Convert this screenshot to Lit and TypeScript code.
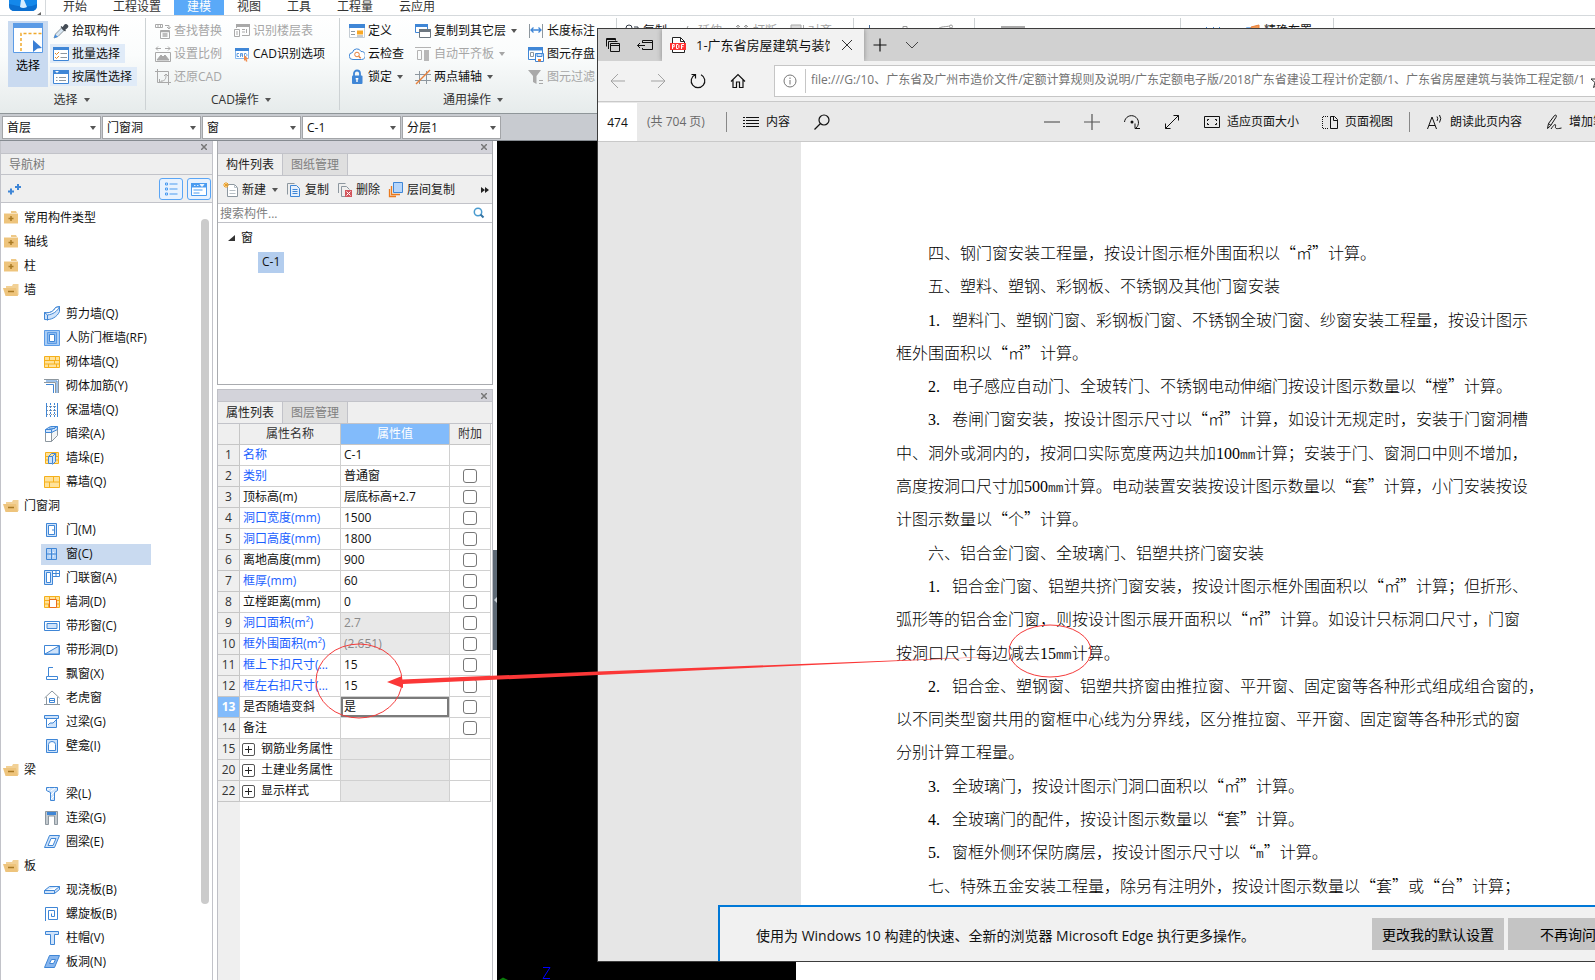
import { LitElement, html, svg, css, nothing, TemplateResult } from "lit";
import { customElement } from "lit/decorators.js";
import { classMap } from "lit/directives/class-map.js";

const B = "#3f86d6";
const L = "#cfe3fa";
const G = "#8d979f";
const Y = "#f5b01b";
const YL = "#ffe29a";

const brick = svg`<path d="M.5 2.500h15v11H.5z" fill=${YL} stroke=${Y}/><path d="M0 6.500h16M0 10h16M5.500 2v4.500M10.500 6.500V10M4.500 10v4M11.500 2v4.500M12.500 10v4" stroke=${Y} fill="none"/>`;

const ICONS: Record<string, TemplateResult> = {
  pick: svg`<path d="M1 15l1.500-4 6-6 2.500 2.500-6 6z" fill="#d8e6f2" stroke=${G}/><path d="M1 15l1.300-3.500 2.500 2.300z" fill="#3d8ee8"/><path d="M8 3.500l4.500 4.500M9.500 5.500L12 2c1-1.200 3.500.8 2.300 2.200L11 7z" fill="#444c55" stroke="#444c55" stroke-width="1.300"/>`,
  batch: svg`<path d="M.5 1.500h15v13H.5z" fill="#fff" stroke=${B}/><path d="M0 1h16v3H0z" fill=${B}/><path d="M2 7l1.500 1.500L6 6M2 11l1.500 1.500L6 10" stroke="#e08a2b" fill="none"/><path d="M7.500 7.500H14M7.500 11.500H14" stroke=${G}/>`,
  byattr: svg`<path d="M.5 1.500h15v13H.5z" fill="#fff" stroke=${B}/><path d="M0 1h16v4H0z" fill=${B}/><path d="M2 2h4l-2 2z" fill="#fff"/><path d="M3 8.500h1.500M3 11.500h1.500M6 8.500h7M6 11.500h7" stroke=${G}/>`,
  find: svg`<g stroke="#a9a9a9" fill="none"><path d="M.5 1.500h7v3h-7zM3 1.500v3M5.500 1.500v3M10 2.500h4v3M12 4l2 2 1.500-2M5.500 7.500h9v8h-9z"/><path d="M6 8.500h8M7.500 11h5M7.500 13h5" stroke-width="1.500"/></g>`,
  scale: svg`<g stroke="#a9a9a9" fill="none"><path d="M1 2.500h5M3 .5l-2 2 2 2M10 2.500h5M13 .5l2 2-2 2M.5 6.500h15v9H.5z"/><path d="M2 14l4-5 2 2 2-2 4 5z" fill="#a9a9a9"/></g>`,
  restore: svg`<g stroke="#a9a9a9" fill="none"><path d="M2.500 0v13.500H16M0 2.500h13.500V16"/><path d="M6 12c4 0 5-2 5-6M4.500 10v3h3M9 7l2-2 2 2"/></g>`,
  floors: svg`<g stroke="#a9a9a9" fill="none"><path d="M2.500 5V2.500h13v10H8M.5 6.500h5v7h-5zM2 9h2M2 11h2M8 6.500h3M8 9h3M12.500 6v4"/><path d="M2 2.500h14" stroke-width="3"/></g>`,
  cadopt: svg`<path d="M1.500 2.500h13v10h-13z" fill="#fff" stroke="#86b8ef"/><path d="M1 2h14v3H1z" fill=${B}/><path d="M5 7.500H3v3h2M6.500 11V7.500h2V11M6.500 9h2M10.500 7.500h1.500l.8 1v1.200l-.8.8h-1.500z" stroke=${B} fill="none" stroke-width=".8"/><path d="M10 9l4.500 4-2 .3 1 2-1.500.5-.8-2L10 15z" fill="#f08a4b"/>`,
  define: svg`<path d="M.5 1.500h15v13H.5z" fill="#fff" stroke="#c5cdd4"/><path d="M0 1h16v4H0z" fill=${B}/><path d="M2 8.500h4M2 11.500h4" stroke=${G}/><path d="M8 7.500h6v4H8z" fill="#f9a825"/><path d="M8 13h6" stroke=${G}/>`,
  cloud: svg`<path d="M4 13.500A3.500 3.500 0 0 1 3.500 6.500 4.500 4.500 0 0 1 12 5.500 4 4 0 0 1 12.500 13.500z" fill="#fff" stroke=${B}/><circle cx="8" cy="8.500" r="2.300" fill="none" stroke="#e8803a"/><path d="M9.700 10.200l2 2" stroke="#e8803a" stroke-width="1.400"/>`,
  lock: svg`<path d="M5 7V4.500a3 3 0 0 1 6 0V7" fill="none" stroke=${B} stroke-width="1.800"/><rect x="3" y="6.500" width="10.500" height="8.500" rx="1" fill=${B}/><path d="M8 9v4M6.700 9.700h2.600" stroke="#fff" stroke-width="1.400"/>`,
  copyfl: svg`<path d="M.5 1.500h12v8H.5z" fill="#fff" stroke=${B}/><path d="M0 1h13v3H0z" fill=${B}/><path d="M4.500 6.500h11v8h-11z" fill="#fff" stroke="#6d7780"/><path d="M4 6h12v3H4z" fill="#6d7780"/>`,
  align: svg`<path d="M0 1.500h16" stroke="#b3b3b3"/><path d="M2.500 4.500h4v9h-4z" fill="none" stroke="#b3b3b3"/><path d="M9 4h5v11H9z" fill="#b8b8b8"/>`,
  axis: svg`<path d="M4.500 2v13M0 5.500h16M0 11.500h16M11.500 2v13" stroke=${G}/><path d="M1 15L15 1" stroke="#e8803a" stroke-width="1.400"/>`,
  length: svg`<path d="M1.500 1v14M14.500 1v14" stroke=${G}/><path d="M3 7h10M5.500 4.500L3 7l2.500 2.500M10.500 4.500L13 7l-2.500 2.500" stroke=${B} fill="none" stroke-width="1.300"/>`,
  save: svg`<path d="M.5 1.500h14v12H.5z" fill="#fff" stroke=${B}/><path d="M0 1h15v3.500H0z" fill=${B}/><path d="M2.500 6.500h3v4h-3z" stroke=${G} fill="none"/><path d="M7.500 7.500h8v8h-8z" fill="#fff" stroke=${B}/><path d="M9 7.500h5v3H9z" fill=${L} stroke=${B}/><path d="M10 13h3v2.500h-3z" fill="#e8803a"/>`,
  filter: svg`<path d="M0 1h13L8.500 7v8L5 13V7z" fill="#a9a9a9"/><path d="M11 11.500h4M11 14.500h4" stroke="#a9a9a9"/>`,
  rcopy: svg`<circle cx="5" cy="5" r="3" fill="#fff" stroke="#333a44"/><path d="M10 4h4v4M12 6l2 2 2-2" fill="none" stroke="#333a44"/><circle cx="11" cy="12" r="3" fill="none" stroke="#333a44"/>`,
  extend: svg`<path d="M9 3L4 15" stroke="#9a9a9a"/>`,
  brk: svg`<path d="M4 2v4M2 4l2-2 2 2M12 2v4M10 4l2-2 2 2M0 9h16" stroke="#9a9a9a" fill="none"/>`,
  alignr: svg`<path d="M2 2h10v12H2z" fill="#dcdcdc" stroke="#a9a9a9"/><path d="M14.500 2v13" stroke="#a9a9a9"/>`,
  vline: svg`<path d="M8.500 2v14" stroke="#4d6f99"/>`,
  node: svg`<path d="M4 3.500h4v4H4zM8 6h8" fill="#fff" stroke="#9a9a9a"/>`,
  arc: svg`<path d="M1 6C4 3 9 4 13 3" fill="none" stroke="#9a9a9a"/><circle cx="14" cy="3.500" r="1.500" fill="#fff" stroke="#9a9a9a"/><circle cx="2" cy="7" r="1.500" fill="#fff" stroke="#9a9a9a"/>`,
  slab: svg`<path d="M0 3h24v12H0z" fill="#a9a9a9"/>`,
  rectg: svg`<path d="M.5 5.500h17v9H.5z" fill="#fff" stroke="#a9a9a9"/>`,
  bars: svg`<path d="M1.500 4v12M8.500 4v12M14.500 4v12" stroke=${B}/>`,
  layout: svg`<path d="M1.500 4.500h10v10h-10z" fill="#e9f2fc" stroke="#86b8ef"/><path d="M6 4l8-2v6l-7 1z" fill="#f39a55" stroke="#e8803a"/>`,
  shear: svg`<path d="M.5 6.500c5 1 9-1 11-5l4-1v5c-2 5-8 9-15 8z" fill=${L} stroke=${B}/><path d="M.5 6.500c5 1 9-1 11-5l4-1c-2 5-7 8-12 8.500z" fill="#fff" stroke=${B}/><path d="M3.500 9v5.500" stroke=${B}/>`,
  frame: svg`<path d="M.5.5h15v15H.5z" fill="#a9cdf5" stroke="#5b9be6"/><path d="M3.500 2.500h9v11h-9z" fill="#8fbcf0" stroke="#5b9be6"/><path d="M5.500 4.500h5v7h-5z" fill="#fff" stroke=${B}/>`,
  brick,
  rebar: svg`<path d="M0 1.500h14.500V15M0 4.500h11.500V15" stroke=${G} fill="none"/><path d="M2 3h11v12M2 6.500h7.500V15" stroke=${B} fill="none"/>`,
  insul: svg`<path d="M6.500 1v14M10.500 1v14" stroke=${B} stroke-dasharray="2 1"/><path d="M2.500 1v14M13.500 1v14" stroke=${B}/><path d="M3 4.500h10M3 8.500h10M3 12.500h10" stroke=${G} stroke-dasharray="1 1"/>`,
  hbeam: svg`<path d="M1.500 6.500h6v9h-6z" fill="#fff" stroke=${G}/><path d="M7.500 6.500l6-4v7l-6 6z" fill="#f1f4f6" stroke=${G}/><path d="M1.500 6.500v-3l5-3h7v3l-6 3z" fill=${L} stroke=${B}/><path d="M1.500 3.500h6v3M7.500 3.500l6-3M5 2l6 .5" stroke=${B} fill="none"/>`,
  pier: svg`<path d="M1.500 2.500h13v11h-13z" fill=${YL} stroke=${Y}/><path d="M1 6.500h14M1 10h14M5 10v3M12 3v4" stroke=${Y}/><path d="M4.500 6.500h4v7h-4zM8.500 6.500l3-3v8l-3 3" fill=${L} stroke=${B}/><path d="M4.500 6.500l3-3h4" fill="none" stroke=${B}/>`,
  curtain: svg`<path d="M.5 2.500h15v11H.5z" fill=${YL} stroke=${Y}/><path d="M0 8h16M9.500 2v6M5.500 8v6" stroke=${Y}/>`,
  door: svg`<path d="M2.500 1.500h10v13h-10z" fill=${L} stroke=${B}/><path d="M4.500 3.500h6v9h-6z" fill="#fff" stroke=${B}/><path d="M9 7v2" stroke=${B}/>`,
  window: svg`<path d="M2.500 2.500h10v11h-10zM7.500 2.500v11M2.500 8h10" fill="#b7d4f6" stroke=${B}/><path d="M6 6v1M9.500 6v1M6 9.500v1M9.500 9.500v1" stroke="#fff"/>`,
  doorwin: svg`<path d="M.5.5h8v14h-8z" fill=${L} stroke=${B}/><path d="M2.500 2.500h4v10h-4z" fill="#fff" stroke=${B}/><path d="M8.500.5h7v6h-7zM12 .5v6M8.500 3.500h7" fill="#fff" stroke=${B}/>`,
  hole: svg`${brick}<path d="M5.500 5.500h7v8h-7z" fill="#fff" stroke="#ea6d1e"/>`,
  stripwin: svg`<path d="M.5 3.500h15v9H.5z" fill="#fff" stroke=${B}/><path d="M3 5.500h10v5H3z" fill=${L} stroke=${B}/>`,
  striphole: svg`<path d="M.5 3.500h15v9H.5z" fill="#fff" stroke=${B}/><path d="M1 12L15 4v8z" fill=${L} stroke=${B}/>`,
  bay: svg`<path d="M9 1.500H4.500v9h9v3h-11v-3h2" fill="none" stroke=${B}/>`,
  dormer: svg`<path d="M.5 8L8 1l7.500 7M2.500 7v7.500M13.500 7v7.500M0 14.500h16" fill="none" stroke=${G}/><path d="M5.500 8.500h5v4h-5zM5.500 10.500h5" fill="#fff" stroke=${B}/>`,
  lintel: svg`<path d="M.5 1.500h14v3H.5z" fill=${L} stroke=${B}/><path d="M2.500 4.500h10v9h-10z" fill="#fff" stroke=${B}/><path d="M3 13l3-4h3l3-3v7z" fill=${L}/><path d="M4 11l2-2h3l3-3" fill="none" stroke=${B}/>`,
  niche: svg`<path d="M2.500 1.500h11v13h-11z" fill=${L} stroke=${B}/><path d="M4.500 12.500v-6a3.500 3 0 0 1 7 0v6z" fill="#fff" stroke=${B}/>`,
  beam: svg`<path d="M2.500 1.500h11v3l-3 2v8h-4v-8l-4-2z" fill=${L} stroke=${B}/><path d="M3 4l3-2M7 5l4-3M7 9l3-3M7 13l3-3" stroke="#fff"/>`,
  link: svg`<path d="M1.500 1.500h12v13h-3V6h-6v8.500h-3z" fill="#c4cacf" stroke=${G}/><path d="M3 2h9v3H3z" fill=${B}/>`,
  ring: svg`<path d="M5.500 1.500h10l-5 12H.5z" fill=${L} stroke=${B}/><path d="M7 4.500h5l-3 7H4z" fill="#fff" stroke=${B}/>`,
  slabc: svg`<path d="M.5 8.500l5-4h10l-5 4zM.5 8.500v3h10l5-4v-3M10.500 8.500v3" fill=${L} stroke=${B}/>`,
  spiral: svg`<path d="M1.500 15V1.500h12v12H4.500v-9h6v6h-3v-3" fill="none" stroke=${B}/>`,
  cap: svg`<path d="M1.500 1.500h13v3h-4v10h-4v-10h-5z" fill=${L} stroke=${B}/>`,
  slabh: svg`<path d="M5.500 1.500h10l-5 12H.5z" fill="#86b5ee" stroke=${B}/><path d="M7.500 5.500h4l-2 4h-4z" fill="#fff" stroke=${B}/>`,
  slabx: svg`<path d="M4.500 3.500h10l-4 9H.5z" fill=${L} stroke=${B}/>`,
  folder: svg`<path d="M8 1h5l1 2H8z" fill="#eec988"/><path d="M1 3.500h14v10H1z" fill="#eec47c"/><path d="M8 6v5M5.500 8.500h5" stroke="#a97a24" stroke-width="1.500"/>`,
  folderopen: svg`<path d="M3 4h6l1-2h5.500v11H3z" fill="#f2d196"/><path d="M0 6h13l2 8H2.500z" fill="#eec47c"/><path d="M5 9.500h6" stroke="#a97a24" stroke-width="1.500"/>`,
  newdoc: svg`<path d="M4.500 2.500h7l3 3v9h-10z" fill="#fff" stroke=${G}/><path d="M11.500 2.500v3h3M6.500 8.500h6M6.500 11.500h6" stroke="#b8c0c6" fill="none"/><path d="M3 0v6M0 3h6M1 1l4 4M5 1L1 5" stroke="#f0a020"/>`,
  copy: svg`<path d="M1.500 12.500v-11h7" fill="none" stroke=${G}/><path d="M4.500 3.500h6l3 3v8h-9z" fill="#e6f0fc" stroke=${B}/><path d="M6.500 7.500h5M6.500 9.500h5M6.500 11.500h5" stroke=${B}/>`,
  del: svg`<path d="M1.500 11V1.500h7M4.500 14.500V4.500h5l3 3M4.500 14.500h4" fill="none" stroke=${G}/><path d="M8 8h7v7H8z" fill="#d3545c"/><path d="M9.500 9.500l4 4M13.500 9.500l-4 4" stroke="#fff"/>`,
  layercopy: svg`<path d="M5.500.5h9v10h-9z" fill="#b6d6fb" stroke=${B}/><path d="M3.500 4v8.500H12M1.500 7v7.500H8" fill="none" stroke="#ea7a1e" stroke-width="1.300"/>`,
  search: svg`<circle cx="7" cy="7" r="3.700" fill="none" stroke="#4a9bcf" stroke-width="1.500"/><path d="M9.500 9.500l3 3" stroke="#3574a3" stroke-width="2"/>`,
  plusplus: svg`<path d="M1 10.500h6M4 7.500v6M8 6h6M11 3v6" stroke=${B} stroke-width="2"/>`,
  list: svg`<path d="M2.500 2h2v2h-2zM2.500 7h2v2h-2zM2.500 12h2v2h-2z" fill="none" stroke="#4a9bf0"/><path d="M6.500 3h8M6.500 8h8M6.500 13h8" stroke="#4a9bf0"/>`,
  card: svg`<path d="M.5 2.500h15v12H.5z" fill="#fff" stroke="#4a9bf0"/><path d="M0 2h16v4.500H0z" fill="#4a9bf0"/><path d="M3 4.500h1.500M6 4.500h1.500M9 3.500h4l-2 2z" stroke="#fff" fill="#fff" stroke-width=".8"/><path d="M2.500 9h9M2.500 12h6" stroke="#4a9bf0"/>`,
  tabs: svg`<path d="M4.500 6.500h9v8h-9zM4.500 8.500h9M2.500 12V4.500h9M.5 9.500v-8h9v2M.5 2.500h9" fill="none" stroke="#111"/>`,
  setaside: svg`<path d="M5.500 6V3.500h10v9h-10V11M5.500 5.500h10M8 8.500H.5M3 6L.5 8.500 3 11" fill="none" stroke="#111"/>`,
  pdf: svg`<path d="M2.500 15.500V.5h8l4 4v11z" fill="#fff" stroke="#222"/><path d="M10.500.5v4h4" fill="none" stroke="#222"/><path d="M0 6h16v7H0z" fill="#f33"/><path d="M2.500 12V7.500h1.700v2.300H2.500M6.500 7.500h1.500l.9 1v2l-.9 1H6.500zM11.500 12V7.500h2.500M11.500 9.700h2" stroke="#fff" fill="none"/>`,
  close: svg`<path d="M3 3l10 10M13 3L3 13" stroke="#333"/>`,
  plus: svg`<path d="M8 1.500v13M1.500 8h13" stroke="#111" stroke-width="1.200"/>`,
  chev: svg`<path d="M2 5l6 6 6-6" fill="none" stroke="#444"/>`,
  back: svg`<path d="M15 8H1M8 1L1 8l7 7" fill="none" stroke="#a3a3a3"/>`,
  fwd: svg`<path d="M1 8h14M8 1l7 7-7 7" fill="none" stroke="#a3a3a3"/>`,
  refresh: svg`<path d="M11 1.800A6.800 6.800 0 1 1 5 1.800M1.500 1.500H5.500V5.500" fill="none" stroke="#111" stroke-width="1.200"/>`,
  home: svg`<path d="M1 8.500L8 1.500l7 7M3 7v7.500h3.500V9h3v5.500H13V7" fill="none" stroke="#111" stroke-width="1.200"/>`,
  info: svg`<circle cx="8" cy="8" r="6" fill="none" stroke="#777"/><path d="M8 7v4.500M8 4.500V6" stroke="#777"/>`,
  star: svg`<path d="M8 1l2 5h5l-4 3.500 1.500 5L8 11.500l-4.500 3 1.500-5L1 6h5z" fill="none" stroke="#333"/>`,
  toc: svg`<path d="M0 3.500h2M0 6.500h2M0 9.500h2M0 12.500h2" stroke="#111"/><path d="M3 3.500h13M3 6.500h13M3 9.500h13M3 12.500h13" stroke="#111"/>`,
  lens: svg`<circle cx="10" cy="6" r="5" fill="none" stroke="#111" stroke-width="1.200"/><path d="M6.500 9.500L.5 15.500" stroke="#111" stroke-width="1.200"/>`,
  minus: svg`<path d="M0 8h16" stroke="#777" stroke-width="1.500"/>`,
  plusg: svg`<path d="M0 8h16M8 0v16" stroke="#555" stroke-width="1.200"/>`,
  rotate: svg`<path d="M.5 8A7 7 0 1 1 12 14M11 9.500v5h5" fill="none" stroke="#111"/><circle cx="8" cy="8" r="1.500" fill="#111"/>`,
  diag: svg`<path d="M1.500 14.500l13-13M9.500 1.500h5v5M1.500 9.500v5h5" fill="none" stroke="#111"/>`,
  fit: svg`<path d="M.5 2.500h15v11H.5z" fill="none" stroke="#111"/><path d="M3.500 7V5.500H5M11 5.500h1.500V7M12.500 9v1.500H11M5 10.500H3.500V9" fill="none" stroke="#111"/>`,
  pages: svg`<path d="M6 2.500H.5v12H6" fill="none" stroke="#111" stroke-dasharray="1 1"/><path d="M8.500 2.500h4l3 3v9h-7z" fill="none" stroke="#111"/><path d="M11.500 2.500v4h4" fill="none" stroke="#111"/>`,
  aloud: svg`<path d="M.5 15L5 3l4.500 12M2 11.500h6" fill="none" stroke="#111"/><path d="M10 2.500q1.500 2 0 4.500M12.500 1q2.500 3.500 0 7.500" fill="none" stroke="#111"/>`,
  pen: svg`<path d="M1.500 14.500l1-5 6-8c1.500-1 2.500 0 1.500 1.800l-5.500 8.500zM2.500 9.500l2.500 2" fill="none" stroke="#111"/><path d="M5 15c4-6 5-5 4.500-2.500s1.500 2.500 6 1.500" fill="none" stroke="#111"/>`,
};

const icon = (name: string, w = 16) =>
  html`<svg class="ic" width=${w} height="16" viewBox="0 0 ${w} 16" aria-hidden="true">${ICONS[name]}</svg>`;
const caret = html`<svg class="caret" width="6" height="4" viewBox="0 0 6 4" aria-hidden="true"><path d="M0 0h6L3 4z" fill="currentColor" /></svg>`;
const cross = html`<svg width="6" height="6" viewBox="0 0 6 6" aria-hidden="true"><path d="M0 0l6 6M6 0L0 6" stroke="#777" stroke-width="1.500" /></svg>`;

type Cmd = { i: string; t: string; off?: boolean; on?: boolean; drop?: boolean };

const GROUPS: { label: string; cls: string; big?: boolean; cols: Cmd[][] }[] = [
  { label: "选择", cls: "g1", big: true, cols: [[
    { i: "pick", t: "拾取构件" }, { i: "batch", t: "批量选择", on: true }, { i: "byattr", t: "按属性选择", on: true }]] },
  { label: "CAD操作", cls: "g2", cols: [
    [{ i: "find", t: "查找替换", off: true }, { i: "scale", t: "设置比例", off: true }, { i: "restore", t: "还原CAD", off: true }],
    [{ i: "floors", t: "识别楼层表", off: true }, { i: "cadopt", t: "CAD识别选项" }]] },
  { label: "通用操作", cls: "g3", cols: [
    [{ i: "define", t: "定义" }, { i: "cloud", t: "云检查" }, { i: "lock", t: "锁定", drop: true }],
    [{ i: "copyfl", t: "复制到其它层", drop: true }, { i: "align", t: "自动平齐板", off: true, drop: true }, { i: "axis", t: "两点辅轴", drop: true }],
    [{ i: "length", t: "长度标注" }, { i: "save", t: "图元存盘" }, { i: "filter", t: "图元过滤", off: true }]] },
];

const TREE: [string, string][] = [
  ["+", "常用构件类型"], ["+", "轴线"], ["+", "柱"], ["-", "墙"],
  ["shear", "剪力墙(Q)"], ["frame", "人防门框墙(RF)"], ["brick", "砌体墙(Q)"], ["rebar", "砌体加筋(Y)"],
  ["insul", "保温墙(Q)"], ["hbeam", "暗梁(A)"], ["pier", "墙垛(E)"], ["curtain", "幕墙(Q)"],
  ["-", "门窗洞"],
  ["door", "门(M)"], ["window", "窗(C)"], ["doorwin", "门联窗(A)"], ["hole", "墙洞(D)"],
  ["stripwin", "带形窗(C)"], ["striphole", "带形洞(D)"], ["bay", "飘窗(X)"], ["dormer", "老虎窗"],
  ["lintel", "过梁(G)"], ["niche", "壁龛(I)"],
  ["-", "梁"], ["beam", "梁(L)"], ["link", "连梁(G)"], ["ring", "圈梁(E)"],
  ["-", "板"], ["slabc", "现浇板(B)"], ["spiral", "螺旋板(B)"], ["cap", "柱帽(V)"], ["slabh", "板洞(N)"], ["slabx", ""],
];

type Prop = { n: number; name: string; v?: string; blue?: boolean; ro?: boolean; nochk?: boolean; group?: boolean; sel?: boolean };
const PROPS: Prop[] = [
  { n: 1, name: "名称", v: "C-1", blue: true, nochk: true },
  { n: 2, name: "类别", v: "普通窗", blue: true },
  { n: 3, name: "顶标高(m)", v: "层底标高+2.7" },
  { n: 4, name: "洞口宽度(mm)", v: "1500", blue: true },
  { n: 5, name: "洞口高度(mm)", v: "1800", blue: true },
  { n: 6, name: "离地高度(mm)", v: "900" },
  { n: 7, name: "框厚(mm)", v: "60", blue: true },
  { n: 8, name: "立樘距离(mm)", v: "0" },
  { n: 9, name: "洞口面积(m²)", v: "2.7", blue: true, ro: true },
  { n: 10, name: "框外围面积(m²)", v: "(2.651)", blue: true, ro: true },
  { n: 11, name: "框上下扣尺寸(...", v: "15", blue: true },
  { n: 12, name: "框左右扣尺寸(...", v: "15", blue: true },
  { n: 13, name: "是否随墙变斜", v: "是", sel: true },
  { n: 14, name: "备注" },
  { n: 15, name: "钢筋业务属性", group: true, ro: true, nochk: true },
  { n: 20, name: "土建业务属性", group: true, ro: true, nochk: true },
  { n: 22, name: "显示样式", group: true, ro: true, nochk: true },
];

// Each paragraph is a list of set lines; item numbers, figures and units are half-width type.
const DOC: string[][] = [
  ["四、钢门窗安装工程量，按设计图示框外围面积以“㎡”计算。"],
  ["五、塑料、塑钢、彩钢板、不锈钢及其他门窗安装"],
  ["1. 塑料门、塑钢门窗、彩钢板门窗、不锈钢全玻门窗、纱窗安装工程量，按设计图示", "框外围面积以“㎡”计算。"],
  ["2. 电子感应自动门、全玻转门、不锈钢电动伸缩门按设计图示数量以“樘”计算。"],
  ["3. 卷闸门窗安装，按设计图示尺寸以“㎡”计算，如设计无规定时，安装于门窗洞槽", "中、洞外或洞内的，按洞口实际宽度两边共加100mm计算；安装于门、窗洞口中则不增加，", "高度按洞口尺寸加500mm计算。电动装置安装按设计图示数量以“套”计算，小门安装按设", "计图示数量以“个”计算。"],
  ["六、铝合金门窗、全玻璃门、铝塑共挤门窗安装"],
  ["1. 铝合金门窗、铝塑共挤门窗安装，按设计图示框外围面积以“㎡”计算；但折形、", "弧形等的铝合金门窗，则按设计图示展开面积以“㎡”计算。如设计只标洞口尺寸，门窗", "按洞口尺寸每边减去15mm计算。"],
  ["2. 铝合金、塑钢窗、铝塑共挤窗由推拉窗、平开窗、固定窗等各种形式组成组合窗的，", "以不同类型窗共用的窗框中心线为分界线，区分推拉窗、平开窗、固定窗等各种形式的窗", "分别计算工程量。"],
  ["3. 全玻璃门，按设计图示门洞口面积以“㎡”计算。"],
  ["4. 全玻璃门的配件，按设计图示数量以“套”计算。"],
  ["5. 窗框外侧环保防腐层，按设计图示尺寸以“m”计算。"],
  ["七、特殊五金安装工程量，除另有注明外，按设计图示数量以“套”或“台”计算；"],
];

const base = css`
  * { box-sizing: border-box; }
  svg { display: block; flex: none; }
  button, select, input { font: inherit; color: inherit; margin: 0; padding: 0; border: 0; background: none; border-radius: 0; }
  button { display: flex; align-items: center; white-space: nowrap; flex: none; }
`;

@customElement("model-ribbon")
class ModelRibbon extends LitElement {
  static styles = [base, css`
    :host { display: block; }
    .menu { display: flex; height: 16px; border-bottom: 1px solid #d5d9dc; background: #fff; overflow: hidden; }
    .logo { width: 46px; margin-right: 4px; padding-left: 8px; border-right: 1px solid #d5d9dc; }
    .menu button { height: 15px; padding: 0 13px 1px; line-height: 14px; color: #333; }
    .menu .on { background: #5aa9f8; color: #fff; }
    .ribbon { display: flex; height: 98px; overflow: hidden; background: linear-gradient(#fff, #fafcfc 40%, #e6ebeb); border-bottom: 1px solid #8f9699; }
    .group { display: flex; flex-direction: column; padding: 5px 9px 0 6px; position: relative; flex: none; }
    .group::after { content: ""; position: absolute; right: 0; top: 2px; bottom: 3px; width: 1px; background: #cdd2d4; }
    .g2 { padding-right: 10px; }
    .g3 { padding-right: 17px; }
    .cols { display: flex; gap: 4px; }
    .g1 .cols { gap: 2px; padding-left: 2px; }
    .g3 .cols { gap: 3px; }
    .col { display: flex; flex-direction: column; align-items: flex-start; gap: 4px; height: 66px; }
    .cmd { height: 19px; gap: 3px; padding: 0 5px 0 3px; color: #111; }
    .cmd .caret { margin-left: 2px; color: #555; }
    .cmd.off, .cmd.off .caret { color: #a6a6a6; }
    .cmd.on { background: #e0ebf8; }
    .big { flex-direction: column; width: 40px; height: 66px; background: #c9daf0; padding-top: 2px; gap: 5px; }
    .label { flex: 1; display: flex; align-items: center; justify-content: center; gap: 6px; color: #333; }
    .label .caret { color: #555; }
    .row { display: flex; height: 19px; }
    .far { padding: 5px 17px 0 4px; }
    .edit { gap: 4px; }
    .draw { gap: 14px; }
    .shape { gap: 41px; padding-left: 19px; }
    .place { gap: 16px; padding-left: 17px; }
    .bar { display: flex; gap: 1px; height: 27px; padding: 2px 2px 1px; background: #c8cbd0; border-bottom: 1px solid #868b91; }
    .combo { display: grid; width: 99px; background: #fff; border: 1px solid #a3a5a8; align-items: center; }
    .combo select { grid-area: 1 / 1; appearance: none; padding-left: 4px; height: 20px; width: 97px; color: #111; outline: 0; }
    .combo .caret { grid-area: 1 / 1; justify-self: end; margin-right: 4px; color: #555; pointer-events: none; }
  `];
  cmd(c: Cmd) {
    return html`<button class=${classMap({ cmd: true, off: !!c.off, on: !!c.on })}>${icon(c.i, c.i === "slab" ? 24 : c.i === "rectg" ? 18 : 16)}${c.t}${c.drop ? caret : nothing}</button>`;
  }
  render() {
    const combos: [string, string][] = [["楼层", "首层"], ["构件类型", "门窗洞"], ["构件", "窗"], ["名称", "C-1"], ["分层", "分层1"]];
    return html`
      <nav class="menu">
        <div class="logo">
          <svg width="34" height="16" viewBox="0 0 34 16" aria-hidden="true">
            <path d="M1 0h28v5q0 6-6 6H7Q1 11 1 5z" fill="#1488ea" />
            <path d="M1 4v1q0 6 6 6h16q6 0 6-6V4Q20 9 1 4z" fill="#0b6fd0" />
            <path d="M13 0h3l3 7q-4 2-7 0z" fill="#d6eeff" />
            <path d="M33 12v3h-4z" fill="#666" />
          </svg>
        </div>
        ${["开始", "工程设置", "建模", "视图", "工具", "工程量", "云应用"].map((t) => html`<button class=${t === "建模" ? "on" : ""}>${t}</button>`)}
      </nav>
      <div class="ribbon">
        ${GROUPS.map((g) => html`<div class="group ${g.cls}">
          <div class="cols">
            ${g.big ? html`<button class="big">
              <svg width="30" height="30" viewBox="0 0 30 30" aria-hidden="true">
                <path d="M.5.5h29v29H.5z" fill="#fff" stroke="#5b9be6" /><path d="M0 0h30v5H0z" fill="#5b9be6" />
                <path d="M8 28V10.500h21" fill="none" stroke="#f0a92c" stroke-width="1.500" stroke-dasharray="3 2" />
                <path d="M20 17l9 8-4.500.5L20 29z" fill="#3a7fd5" />
              </svg>选择</button>` : nothing}
            ${g.cols.map((c) => html`<div class="col">${c.map((x) => this.cmd(x))}</div>`)}
          </div>
          <div class="label">${g.label}${caret}</div>
        </div>`)}
        <div class="group far"><div class="row edit">
          ${[{ i: "rcopy", t: "复制" }, { i: "extend", t: "延伸", off: true }, { i: "brk", t: "打断", off: true }, { i: "alignr", t: "对齐", off: true }].map((x) => this.cmd(x))}
        </div></div>
        <div class="group far"><div class="row draw">${["vline", "node", "arc"].map((i) => this.cmd({ i, t: "" }))}</div></div>
        <div class="group far"><div class="row shape">${["slab", "rectg", "rectg"].map((i) => this.cmd({ i, t: "" }))}</div></div>
        <div class="group far"><div class="row place">${this.cmd({ i: "bars", t: "" })}${this.cmd({ i: "layout", t: "精确布置" })}</div></div>
      </div>
      <div class="bar">
        ${combos.map(([l, v]) => html`<div class="combo"><select aria-label=${l}><option>${v}</option></select>${caret}</div>`)}
      </div>`;
  }
}

@customElement("nav-tree")
class NavTree extends LitElement {
  static styles = [base, css`
    :host { display: flex; flex-direction: column; border: 1px solid #c2c3c9; border-width: 0 1px; background: #fff; min-height: 0; }
    .strip { height: 13px; background: #d3d3da; border-bottom: 1px solid #c2c3c9; display: flex; align-items: center; justify-content: flex-end; padding-right: 5px; flex: none; }
    .title { height: 21px; line-height: 21px; padding-left: 8px; background: #efefef; color: #777; border-bottom: 1px solid #c2c3c9; flex: none; }
    .tools { height: 28px; background: #efefef; border-bottom: 1px solid #c2c3c9; display: flex; align-items: center; gap: 4px; padding: 1px 1px 0 6px; flex: none; }
    .tools .sp { flex: 1; }
    .tg { width: 24px; height: 22px; justify-content: center; border: 1px solid #5aa5f5; border-radius: 3px; background: #e8f2fe; }
    .body { flex: 1; min-height: 0; display: flex; overflow: hidden; }
    ul { list-style: none; margin: 0; padding: 3px 0 0; flex: 1; }
    li { height: 24px; display: flex; align-items: center; }
    li.top { padding-left: 2px; gap: 5px; color: #111; }
    li.kid { padding-left: 40px; }
    .node { display: flex; align-items: center; gap: 6px; height: 21px; padding-left: 3px; min-width: 110px; color: #111; }
    .sel { background: #c9daf0; }
    .bar { width: 8px; margin: 16px 3px 76px 0; border-radius: 4px; background: #cbcbcb; }
  `];
  render() {
    return html`
      <div class="strip">${cross}</div>
      <div class="title">导航树</div>
      <div class="tools"><button aria-label="添加">${icon("plusplus")}</button><span class="sp"></span>
        <button class="tg" aria-label="列表">${icon("list")}</button><button class="tg" aria-label="卡片">${icon("card")}</button></div>
      <div class="body"><ul>
        ${TREE.map(([k, t]) => k === "+" || k === "-"
          ? html`<li class="top">${icon(k === "+" ? "folder" : "folderopen")}${t}</li>`
          : html`<li class="kid"><span class="node ${t === "窗(C)" ? "sel" : ""}">${icon(k)}${t}</span></li>`)}
      </ul><div class="bar"></div></div>`;
  }
}

@customElement("component-dock")
class ComponentDock extends LitElement {
  static styles = [base, css`
    :host { display: flex; flex-direction: column; gap: 4px; min-height: 0; }
    section { border: 1px solid #bfc0c6; border-top: 0; background: #fff; display: flex; flex-direction: column; }
    .list { flex: none; height: 244px; border-color: #a9abaf; }
    .props { flex: 1; min-height: 0; border-bottom: 0; border-top: 1px solid #bfc0c6; overflow: hidden; }
    .strip { height: 12px; background: #d3d3da; border-bottom: 1px solid #c2c3c9; display: flex; align-items: center; justify-content: flex-end; padding-right: 5px; flex: none; }
    .list .strip { height: 13px; }
    .tabs { display: flex; height: 22px; background: #efefef; border-bottom: 1px solid #c2c3c9; flex: none; }
    .tabs button { width: 65px; padding-left: 8px; border-right: 1px solid #c2c3c9; color: #222; }
    .tabs button + button { background: #dfdfdf; color: #808080; }
    .tools { display: flex; height: 28px; background: #efefef; border-bottom: 1px solid #c2c3c9; align-items: center; padding: 1px 3px 0 5px; gap: 8px; color: #222; flex: none; }
    .tools button { gap: 3px; }
    .tools .caret { margin: 0 0 0 3px; color: #555; }
    .tools .more { margin-left: auto; }
    .find { display: flex; align-items: center; height: 19px; border-bottom: 1px solid #bfc0c6; padding: 0 5px 0 2px; flex: none; }
    .find input { flex: 1; min-width: 0; height: 18px; outline: 0; }
    .find input::placeholder { color: #808080; opacity: 1; }
    .tree { padding: 3px 0 0 10px; color: #111; }
    .tn { display: flex; align-items: center; gap: 6px; height: 24px; }
    .leaf { display: inline-block; margin: 2px 0 0 30px; height: 21px; line-height: 20px; padding: 0 4px; background: #b3cdee; }
    table { border-collapse: separate; border-spacing: 0; table-layout: fixed; width: 273px; color: #111; }
    .cn { width: 22px; } .cm { width: 101px; } .cv { width: 109px; } .cx { width: 41px; }
    th, td { height: 21px; padding: 0; line-height: 20px; font-weight: 400; border: solid #d0d0d0; border-width: 0 1px 1px 0; white-space: nowrap; overflow: hidden; text-align: left; }
    thead th { background: #efefef; text-align: center; color: #333; border-color: #c6c6c6; }
    thead .hot { background: #82bbfb; color: #fff; }
    tbody th { background: #efefef; text-align: center; color: #333; border-color: #c6c6c6; }
    tbody .hot { background: #82bbfb; color: #fff; font-weight: 700; }
    td { padding-left: 3px; }
    .blue { color: #1b5fff; }
    .ro { background: #e8e8e8; color: #8a8a8a; }
    .edit { box-shadow: inset 0 0 0 2px #7b7b7b; }
    .ck { padding: 0; }
    .ck input { display: block; margin: 0 auto; appearance: none; width: 14px; height: 14px; border: 1px solid #777; border-radius: 3px; background: #fff; }
    .grp { display: flex; align-items: center; gap: 6px; height: 20px; }
    .grp button { width: 13px; height: 13px; border: 1px solid #555; border-radius: 2px; justify-content: center; margin-left: -1px; }
    .gut { flex: 1; width: 22px; background: #efefef; }
  `];
  render() {
    return html`
      <section class="list">
        <div class="strip">${cross}</div>
        <div class="tabs"><button>构件列表</button><button>图纸管理</button></div>
        <div class="tools">
          <button>${icon("newdoc")}新建${caret}</button><button>${icon("copy")}复制</button>
          <button>${icon("del")}删除</button><button>${icon("layercopy")}层间复制</button>
          <button class="more" aria-label="更多"><svg width="8" height="6" viewBox="0 0 8 6"><path d="M0 0l4 3-4 3zM4 0l4 3-4 3z" fill="#222" /></svg></button>
        </div>
        <div class="find"><input aria-label="搜索构件" placeholder="搜索构件..." />${icon("search")}</div>
        <div class="tree">
          <div class="tn"><svg width="7" height="6" viewBox="0 0 7 6"><path d="M7 0v6H0z" fill="#333" /></svg>窗</div>
          <span class="leaf">C-1</span>
        </div>
      </section>
      <section class="props">
        <div class="strip">${cross}</div>
        <div class="tabs"><button>属性列表</button><button>图层管理</button></div>
        <table>
          <colgroup><col class="cn" /><col class="cm" /><col class="cv" /><col class="cx" /></colgroup>
          <thead><tr><th></th><th>属性名称</th><th class="hot">属性值</th><th>附加</th></tr></thead>
          <tbody>
            ${PROPS.map((p) => html`<tr>
              <th class=${p.sel ? "hot" : ""}>${p.n}</th>
              <td class=${p.blue ? "blue" : ""}>${p.group
                ? html`<div class="grp"><button aria-label="展开"><svg width="7" height="7" viewBox="0 0 7 7"><path d="M0 3.500h7M3.500 0v7" stroke="#222" /></svg></button>${p.name}</div>`
                : p.name}</td>
              <td class=${classMap({ ro: !!p.ro, edit: !!p.sel })}>${p.v ?? nothing}</td>
              <td class="ck">${p.nochk ? nothing : html`<input type="checkbox" aria-label=${p.name} />`}</td>
            </tr>`)}
          </tbody>
        </table>
        <div class="gut"></div>
      </section>`;
  }
}

@customElement("pdf-browser")
class PdfBrowser extends LitElement {
  static styles = [base, css`
    :host { display: flex; flex-direction: column; border: solid #3c3c3c; border-width: 1px 0 1px 1px; background: #f2f2f2; overflow: hidden; color: #111; }
    .tabs { display: flex; height: 32px; background: #d1d1d1; align-items: center; flex: none; padding-left: 8px; }
    .tabs .two { display: flex; gap: 15px; width: 56px; }
    .tab { display: flex; align-items: center; width: 202px; height: 32px; padding: 0 9px 0 8px; background: #f2f2f2; font-size: 13px; box-shadow: 0 0 5px #888; flex: none; clip-path: inset(0 -6px 0 -6px); }
    .tab .t { width: 136px; margin: 0 9px 0 10px; overflow: hidden; white-space: nowrap; padding-bottom: 1px; }
    .tabs .add { margin: 0 16px 0 8px; }
    .nav { display: flex; align-items: center; height: 41px; flex: none; border-bottom: 1px solid #c9c9c9; padding-left: 12px; }
    .nav button { margin-right: 24px; }
    .addr { flex: 1; display: flex; align-items: center; height: 32px; background: #fff; border: 1px solid #c6c6c6; border-right: 0; margin-left: 4px; padding-left: 7px; min-width: 0; overflow: hidden; }
    .addr i { width: 1px; height: 24px; background: #c6c6c6; margin: 0 5px 0 7px; flex: none; }
    .addr input { flex: none; width: 772px; height: 24px; margin-right: 7px; padding-bottom: 5px; color: #737373; outline: 0; }
    .tools { display: flex; align-items: center; height: 40px; flex: none; background: #e9e9e9; border-bottom: 1px solid #c9c9c9; }
    .page { width: 39px; height: 38px; padding-top: 1px; background: #fff; text-align: center; flex: none; }
    .total { color: #6a6a6a; margin-left: 10px; width: 79px; white-space: nowrap; flex: none; }
    .sep { width: 1px; height: 20px; background: #888; flex: none; }
    .tools button { gap: 7px; }
    .tools button, .total { padding-top: 1px; }
    .toc { margin: 0 24px 0 16px; }
    .lens { margin-right: 214px; }
    .zoom { display: flex; gap: 24px; margin-right: 24px; }
    .fit { margin-right: 23px; } .view { margin-right: 16px; } .aloud { margin: 0 24px 0 17px; }
    .doc { flex: 1; min-height: 0; background: #e6e6e6; padding-left: 203px; display: grid; }
    .sheet { background: #fff; padding: 94px 0 59px 95px; display: grid; grid-auto-rows: 1fr; min-height: 0; font: 300 16px/33px "Noto Sans CJK SC", "Noto Sans SC", sans-serif; color: #000; }
    .sheet p { display: contents; }
    .ln { white-space: pre; min-height: 0; }
    p .ln:first-child { padding-left: 32px; }
    .num, .item { font-family: "Liberation Serif", serif; line-height: 20px; }
    .item { display: inline-block; width: 24px; }
    .unit { font: 13px "Liberation Mono", monospace; color: #333; }
    .tip { position: absolute; left: 120px; right: 0; bottom: 0; height: 56px; display: flex; align-items: center; background: #f1f1f1; border: solid #0078d7; border-width: 2px 0 0 2px; padding-left: 36px; font-size: 14px; white-space: nowrap; }
    .msg { flex: 1; padding-top: 3px; }
    .tip button { height: 32px; background: #c4c4c4; width: 132px; justify-content: center; margin-left: 4px; padding-top: 1px; color: #000; }
    .tip button:last-child { width: 87px; justify-content: flex-start; padding-left: 32px; overflow: hidden; }
  `];
  line(s: string) {
    const parts = s.split(/(\d\. |\d+|m+)/);
    return html`<span class="ln">${parts.map((x, i) => {
      if (i % 2 === 0) return x;
      const cls = x.includes(".") ? "item" : x.startsWith("m") ? "unit" : "num";
      return html`<span class=${cls}>${x}</span>`;
    })}</span>`;
  }
  render() {
    const b = (i: string, l: string) => html`<button aria-label=${l}>${icon(i)}</button>`;
    return html`
      <div class="tabs">
        <div class="two">${b("tabs", "标签页")}${b("setaside", "搁置")}</div>
        <div class="tab">${icon("pdf")}<span class="t">1-广东省房屋建筑与装饰工程</span>${b("close", "关闭")}</div>
        <button class="add" aria-label="新建标签页">${icon("plus")}</button>${b("chev", "预览")}
      </div>
      <div class="nav">
        ${b("back", "后退")}${b("fwd", "前进")}${b("refresh", "刷新")}${b("home", "主页")}
        <div class="addr">${icon("info")}<i></i><input aria-label="地址" value="file:///G:/10、广东省及广州市造价文件/定额计算规则及说明/广东定额电子版/2018广东省建设工程计价定额/1、广东省房屋建筑与装饰工程定额/1-广东省" />${icon("star")}</div>
      </div>
      <div class="tools">
        <input class="page" aria-label="页码" value="474" /><span class="total">(共 704 页)</span><span class="sep"></span>
        <button class="toc">${icon("toc")}内容</button><button class="lens" aria-label="查找">${icon("lens")}</button>
        <div class="zoom">${b("minus", "缩小")}${b("plusg", "放大")}${b("rotate", "旋转")}${b("diag", "全屏")}</div>
        <button class="fit">${icon("fit")}适应页面大小</button><button class="view">${icon("pages")}页面视图</button><span class="sep"></span>
        <button class="aloud">${icon("aloud")}朗读此页内容</button><button>${icon("pen")}增加笔记</button>
      </div>
      <div class="doc"><article class="sheet">${DOC.map((p) => html`<p>${p.map((l) => this.line(l))}</p>`)}</article></div>
      <div class="tip"><span class="msg">使用为 Windows 10 构建的快速、全新的浏览器 Microsoft Edge 执行更多操作。</span>
        <button>更改我的默认设置</button><button>不再询问</button></div>`;
  }
}

@customElement("app-root")
class AppRoot extends LitElement {
  static styles = [base, css`
    :host { display: flex; flex-direction: column; position: relative; height: 100vh; overflow: hidden; background: #fff; font: 12px/16px "Open Sans", "Noto Sans CJK SC", sans-serif; }
    model-ribbon { flex: none; }
    .work { flex: 1; min-height: 0; display: flex; }
    nav-tree { width: 213px; margin-right: 4px; flex: none; }
    component-dock { width: 276px; flex: none; }
    .split { width: 4px; display: flex; align-items: center; flex: none; }
    .grip { width: 4px; height: 100px; display: flex; align-items: center; background: #5e6a76; margin-top: 78px; }
    .view { width: 299px; background: #000; display: flex; align-items: flex-end; flex: none; }
    pdf-browser { position: absolute; left: 597px; top: 28px; right: 0; bottom: 18px; }
    .marks { position: absolute; left: 0; top: 0; pointer-events: none; }
  `];
  render() {
    return html`
      <model-ribbon></model-ribbon>
      <div class="work">
        <nav-tree></nav-tree>
        <component-dock></component-dock>
        <div class="split"><div class="grip"><svg width="4" height="8" viewBox="0 0 4 8"><path d="M4 1v6L1 4z" fill="#c9d0d6" /></svg></div></div>
        <div class="view">
          <svg width="60" height="14" viewBox="0 0 60 14" aria-hidden="true">
            <path d="M46 1.500h7l-7 11h7" fill="none" stroke="#0000ff" />
            <path d="M2 14l4-2.500 5 2.500z" fill="#0a7a0a" />
          </svg>
        </div>
      </div>
      <pdf-browser></pdf-browser>
      <svg class="marks" width="1100" height="730" viewBox="0 0 1100 730" aria-hidden="true">
        <g fill="none" stroke="#f43b3b"><ellipse cx="359" cy="681" rx="43" ry="37" /><ellipse cx="1050" cy="651" rx="41" ry="26" /></g>
        <path d="M387 682l15-6v3.500L598 671.500 801 664 1009 656 801 665.500 598 675 403 684v4z" fill="#fb3737" />
      </svg>`;
  }
}
